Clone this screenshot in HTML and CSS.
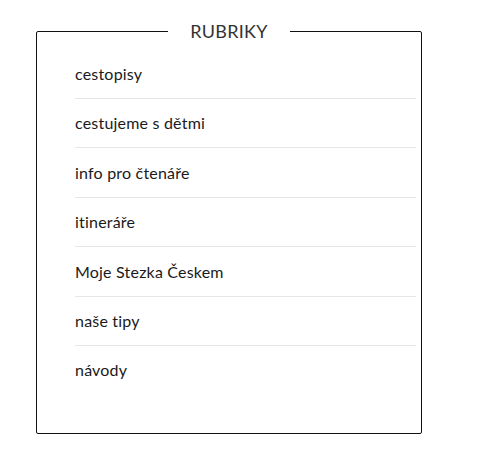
FILE: index.html
```html
<!DOCTYPE html>
<html lang="cs">
<head>
    <meta charset="UTF-8">
    <meta name="viewport" content="width=device-width, initial-scale=1.0">
    <title>Rubriky</title>
    <link rel="stylesheet" href="styles.css">
</head>
<body>
    <div id="sidebar">
        <fieldset class="widget">
            <legend class="widget-title">RUBRIKY</legend>
            <ul class="cats">
                <li><a href="#">cestopisy</a></li>
                <li><a href="#">cestujeme s dětmi</a></li>
                <li><a href="#">info pro čtenáře</a></li>
                <li><a href="#">itineráře</a></li>
                <li><a href="#">Moje Stezka Českem</a></li>
                <li><a href="#">naše tipy</a></li>
                <li><a href="#">návody</a></li>
            </ul>
        </fieldset>
    </div>
</body>
</html>
```

FILE: styles.css
```css
body {
    margin: 0;
    background: #fff;
    font-family: Lato, "Open Sans", sans-serif;
}

#sidebar {
    padding: 19.5px 0 0 36px;
    width: 386px;
}

.widget {
    margin: 0;
    border: 1px solid #111;
    border-radius: 2px;
    padding: 7px 0 39px 0;
}

.widget-title {
    margin: 0 auto;
    padding: 0 22px;
    font-size: 18px;
    line-height: 23px;
    color: #333;
    letter-spacing: 0.3px;
}

.cats {
    list-style: none;
    margin: 0 5px 0 38px;
    padding: 0;
}

.cats li {
    padding: 14.5px 0;
    line-height: 19.4px;
    font-size: 16px;
    letter-spacing: 0.2px;
    border-bottom: 1px solid #e6e6e6;
}

.cats li:last-child {
    border-bottom: 0;
}

.cats a {
    color: #1a1a1a;
    text-decoration: none;
}
```
